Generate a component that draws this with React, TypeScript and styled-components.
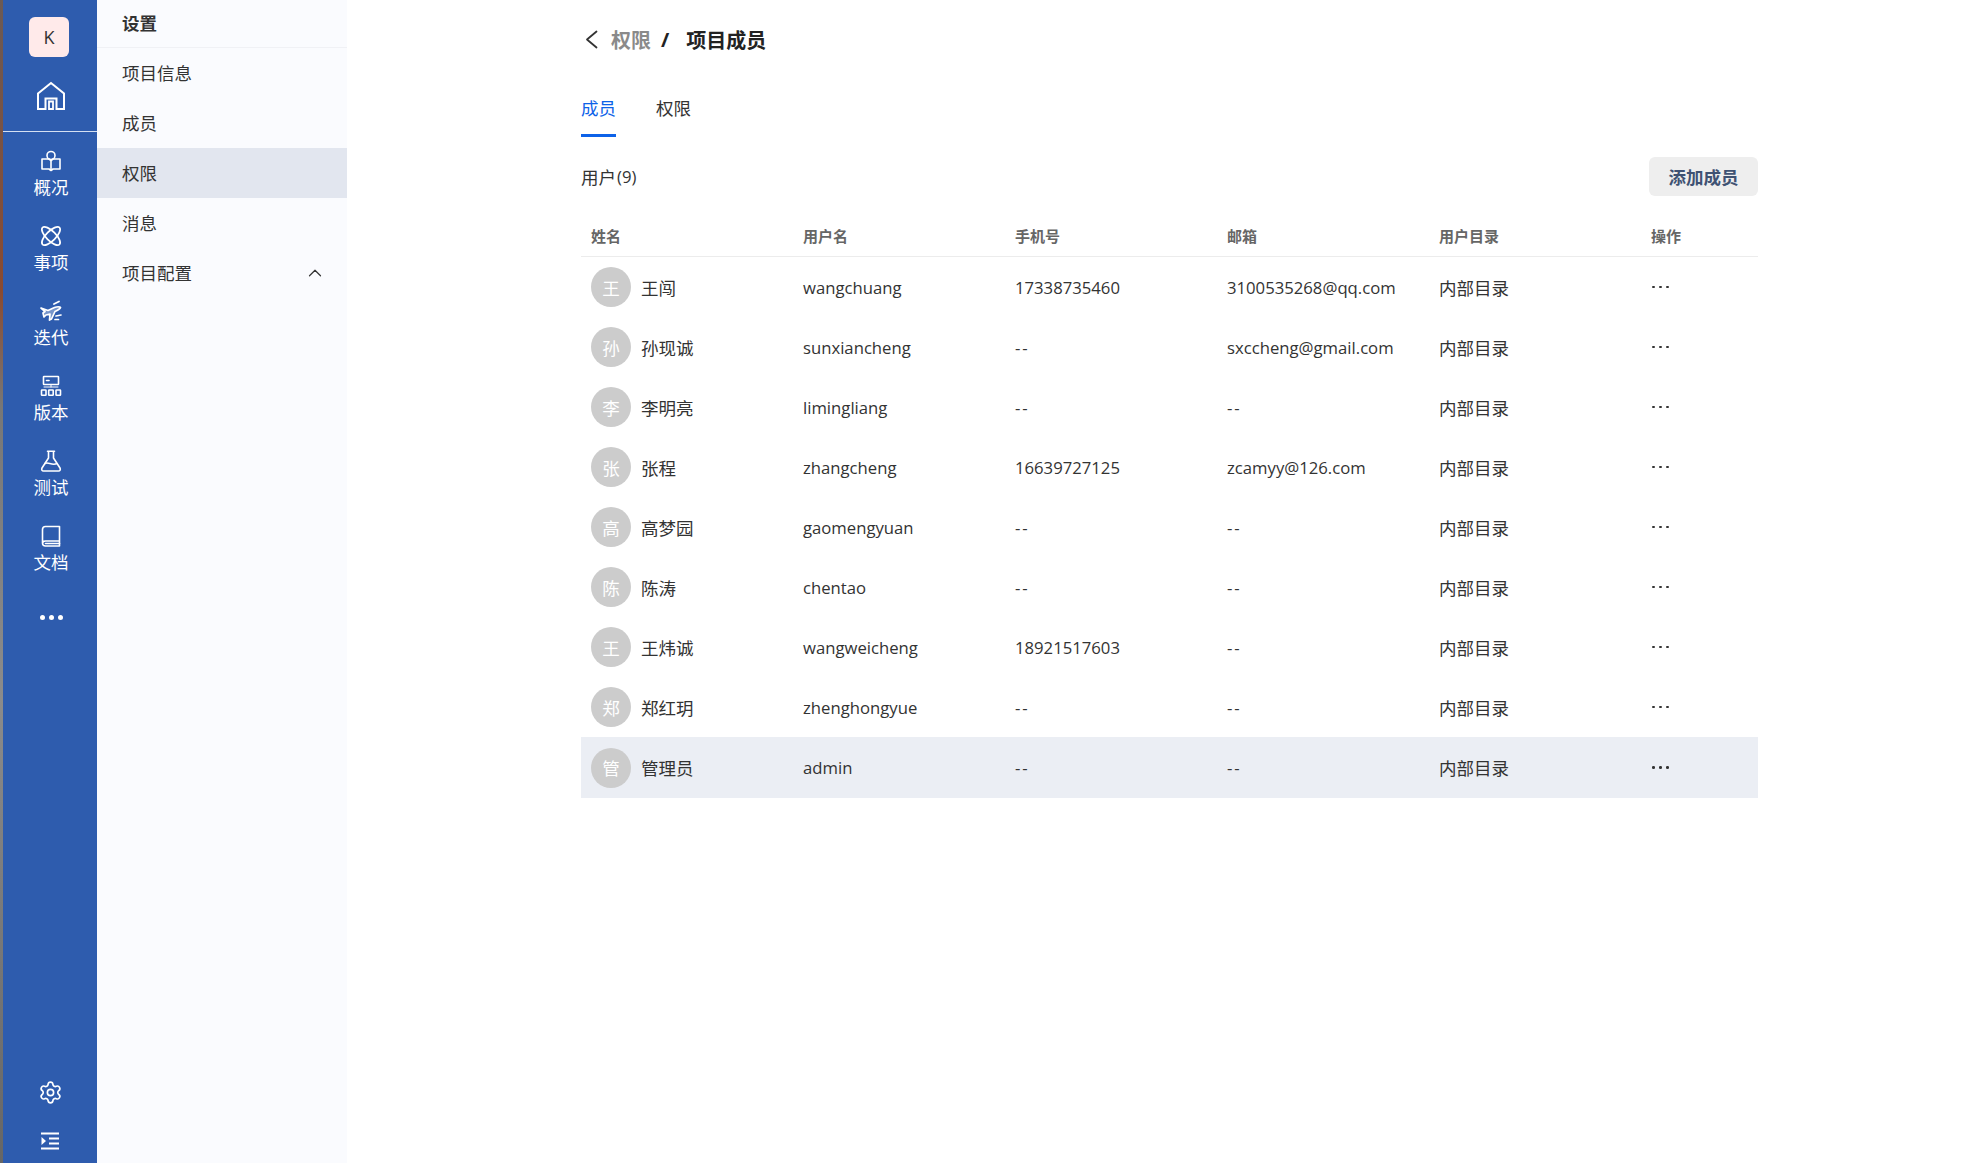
import React from 'react';
import styled, { createGlobalStyle } from 'styled-components';
import { ChevronUp, Settings } from 'lucide-react';

const FONT = '"Open Sans", "Noto Sans CJK SC", sans-serif';

const GlobalStyle = createGlobalStyle`
  html, body { margin: 0; padding: 0; height: 100%; background: #fff; }
  #root { height: 100%; }
  * { box-sizing: border-box; }
`;

const stroke = {
  fill: 'none',
  stroke: '#fff',
  strokeWidth: 1.6,
  strokeLinecap: 'round' as const,
  strokeLinejoin: 'round' as const,
};

const HomeIcon = () => (
  <svg width="30" height="30" viewBox="0 0 30 30" {...stroke} strokeWidth={2}>
    <path d="M2 12.5 L15 2 L28 12.5 V28 H20.5 V17.5 H9.5 V28 H2 Z" strokeLinecap="butt" strokeLinejoin="miter" />
    <path d="M13 28 V20.5 H17 V28 Z" strokeLinecap="butt" strokeLinejoin="miter" strokeWidth={1.8} />
  </svg>
);

const OverviewIcon = () => (
  <svg width="22" height="22" viewBox="0 0 22 22" {...stroke}>
    <circle cx="11" cy="5.5" r="4" />
    <path d="M2 9 H9 L11 10.5 L13 9 H20 V19 H13 L11 20.5 L9 19 H2 Z" />
    <path d="M11 10.5 V20" />
  </svg>
);

const IssueIcon = () => (
  <svg width="22" height="22" viewBox="0 0 22 22" {...stroke} strokeWidth={1.7}>
    <ellipse cx="11" cy="11" rx="12" ry="4.8" transform="rotate(45 11 11)" />
    <ellipse cx="11" cy="11" rx="12" ry="4.8" transform="rotate(-45 11 11)" />
  </svg>
);

const IterationIcon = () => (
  <svg width="22" height="22" viewBox="0 0 22 22" {...stroke} strokeWidth={1.7}>
    <path d="M1 8 L8 10.5 L14.5 7.5 C17 6.5 20 6.5 20.5 7.5 C20 9.5 17 10.5 15 11.5 L11.5 19 L9.5 20 L10 14 L6 15 L4 17 L3 13 L5 11.5 Z" fill="#fff" fillOpacity={0.35} />
    <path d="M14 4 L19 1.5 M16 16 L21 15 M15 19.5 L18.5 19.5" />
  </svg>
);

const VersionIcon = () => (
  <svg width="22" height="22" viewBox="0 0 22 22" {...stroke}>
    <rect x="3.5" y="1.5" width="15" height="8" rx="0.5" />
    <path d="M6.5 5.5 H9" />
    <path d="M11 9.5 V12 M4 12 H18" strokeWidth={1} />
    <rect x="1.5" y="15" width="4.5" height="5.2" rx="0.5" />
    <rect x="8.7" y="15" width="4.5" height="5.2" rx="0.5" />
    <rect x="16" y="15" width="4.5" height="5.2" rx="0.5" />
  </svg>
);

const TestIcon = () => (
  <svg width="22" height="22" viewBox="0 0 22 22" {...stroke}>
    <path d="M7.5 1.2 H14.5 M8.5 1.2 V8 L2 18 C1.2 19.5 2 21 3.5 21 H18.5 C20 21 20.8 19.5 20 18 L13.5 8 V1.2" />
    <path d="M5 13.5 C8 11.5 12 16 17 13.5" />
  </svg>
);

const DocIcon = () => (
  <svg width="22" height="22" viewBox="0 0 22 22" {...stroke}>
    <path d="M19.5 16 V1.5 H5.5 C3.5 1.5 2.5 2.5 2.5 4.5 V18 C2.5 20 3.5 21 5.5 21 H19.5 V16 H5.5 C3.5 16 2.5 17 2.5 18.5" />
    <path d="M5.5 18.5 H19.5" />
  </svg>
);

const IndentIcon = () => (
  <svg width="18" height="18" viewBox="0 0 18 18" fill="#fff">
    <rect x="0" y="0.5" width="18" height="2" />
    <rect x="8" y="5.5" width="10" height="2" />
    <rect x="8" y="10.5" width="10" height="2" />
    <rect x="0" y="15.5" width="18" height="2" />
    <path d="M0.5 5 L5 9 L0.5 13 Z" />
  </svg>
);

const BackIcon = () => (
  <svg width="13" height="19" viewBox="0 0 13 19" fill="none" stroke="#333" strokeWidth="1.8" strokeLinecap="round" strokeLinejoin="round">
    <path d="M11.5 1.5 L2 9.5 L11.5 17.5" />
  </svg>
);

const navItems = [
  { label: '概况', Icon: OverviewIcon },
  { label: '事项', Icon: IssueIcon },
  { label: '迭代', Icon: IterationIcon },
  { label: '版本', Icon: VersionIcon },
  { label: '测试', Icon: TestIcon },
  { label: '文档', Icon: DocIcon },
];

const menuItems = ['项目信息', '成员', '权限', '消息', '项目配置'];

const members = [
  { name: '王闯', user: 'wangchuang', phone: '17338735460', mail: '3100535268@qq.com' },
  { name: '孙现诚', user: 'sunxiancheng', phone: '--', mail: 'sxccheng@gmail.com' },
  { name: '李明亮', user: 'limingliang', phone: '--', mail: '--' },
  { name: '张程', user: 'zhangcheng', phone: '16639727125', mail: 'zcamyy@126.com' },
  { name: '高梦园', user: 'gaomengyuan', phone: '--', mail: '--' },
  { name: '陈涛', user: 'chentao', phone: '--', mail: '--' },
  { name: '王炜诚', user: 'wangweicheng', phone: '18921517603', mail: '--' },
  { name: '郑红玥', user: 'zhenghongyue', phone: '--', mail: '--' },
  { name: '管理员', user: 'admin', phone: '--', mail: '--' },
];

const columns = ['姓名', '用户名', '手机号', '邮箱', '用户目录', '操作'];

const App: React.FC = () => (
  <Page>
    <GlobalStyle />
    <WallpaperEdge />
    <Rail>
      <Logo>K</Logo>
      <HomeLink>
        <HomeIcon />
      </HomeLink>
      <RailNav>
        {navItems.map(({ label, Icon }) => (
          <RailItem key={label}>
            <RailGlyph>
              <Icon />
            </RailGlyph>
            <span>{label}</span>
          </RailItem>
        ))}
        <RailMore>
          <Dot />
          <Dot />
          <Dot />
        </RailMore>
      </RailNav>
      <RailFooter>
        <Settings size={25} strokeWidth={1.6} color="#fff" />
        <IndentIcon />
      </RailFooter>
    </Rail>

    <SideMenu>
      <SideTitle>设置</SideTitle>
      {menuItems.map((item) => (
        <MenuRow key={item} $active={item === '权限'}>
          <span>{item}</span>
          {item === '项目配置' && (
            <MenuChevron>
              <ChevronUp size={22} strokeWidth={1.3} color="#333" />
            </MenuChevron>
          )}
        </MenuRow>
      ))}
    </SideMenu>

    <Main>
      <Content>
        <Breadcrumb>
          <BackIcon />
          <CrumbLink>权限</CrumbLink>
          <CrumbSlash>/</CrumbSlash>
          <CrumbCurrent>项目成员</CrumbCurrent>
        </Breadcrumb>

        <Tabs>
          <Tab $active>成员</Tab>
          <Tab>权限</Tab>
        </Tabs>

        <Toolbar>
          <UserCount>
            用户<Count>(9)</Count>
          </UserCount>
          <AddButton>添加成员</AddButton>
        </Toolbar>

        <HeaderRow>
          {columns.map((col) => (
            <HeaderCell key={col}>{col}</HeaderCell>
          ))}
        </HeaderRow>

        {members.map((m) => (
          <MemberRow key={m.user} $hover={m.user === 'admin'}>
            <NameCell>
              <Avatar>{m.name[0]}</Avatar>
              <span>{m.name}</span>
            </NameCell>
            <Cell>{m.user}</Cell>
            <Cell $dash={m.phone === '--'}>{m.phone}</Cell>
            <Cell $dash={m.mail === '--'}>{m.mail}</Cell>
            <DirectoryCell>内部目录</DirectoryCell>
            <ActionCell>
              <ActionDot />
              <ActionDot />
              <ActionDot />
            </ActionCell>
          </MemberRow>
        ))}
      </Content>
    </Main>
  </Page>
);

const Page = styled.div`
  display: flex;
  height: 100vh;
  overflow: hidden;
  font-family: ${FONT};
  font-size: 17.5px;
  color: #333;
`;

const WallpaperEdge = styled.div`
  width: 3px;
  flex: none;
  background: linear-gradient(#6b5a55 0%, #8a4a30 25%, #777 35%, #8b8b8b 60%, #666 100%);
`;

const Rail = styled.nav`
  width: 94px;
  flex: none;
  background: #2e5cae;
  color: #fff;
  display: flex;
  flex-direction: column;
  align-items: center;
`;

const Logo = styled.div`
  width: 40px;
  height: 40px;
  margin: 17px 2px 0 0;
  border-radius: 6px;
  background: #ffeaea;
  color: #333;
  font-size: 18px;
  display: flex;
  align-items: center;
  justify-content: center;
`;

const HomeLink = styled.div`
  align-self: stretch;
  height: 75px;
  padding: 24px 0 0 2px;
  display: flex;
  justify-content: center;
  border-bottom: 1px solid #d5e0f2;
`;

const RailNav = styled.div`
  display: flex;
  flex-direction: column;
  align-items: center;
  padding: 18px 0 0 2px;
  flex: 1;
`;

const RailItem = styled.div`
  height: 75px;
  display: flex;
  flex-direction: column;
  align-items: center;
  line-height: 24px;
`;

const RailGlyph = styled.div`
  height: 22px;
  margin-bottom: 3px;
`;

const RailMore = styled.div`
  display: flex;
  gap: 4px;
  margin-top: 15px;
`;

const Dot = styled.i`
  width: 5px;
  height: 5px;
  border-radius: 50%;
  background: #fff;
`;

const RailFooter = styled.div`
  display: flex;
  flex-direction: column;
  align-items: center;
  gap: 27px;
  padding-bottom: 13px;
`;

const SideMenu = styled.aside`
  width: 250px;
  flex: none;
  background: #fafbfe;
`;

const SideTitle = styled.div`
  height: 48px;
  padding: 0 0 2px 25px;
  display: flex;
  align-items: center;
  font-weight: 700;
  border-bottom: 1px solid #f0f1f5;
`;

const MenuRow = styled.div<{ $active?: boolean }>`
  height: 50px;
  padding: 0 21px 2px 25px;
  display: flex;
  align-items: center;
  justify-content: space-between;
  background: ${(p) => (p.$active ? '#e2e6ef' : 'transparent')};
`;

const MenuChevron = styled.span`
  display: flex;
  margin-top: 2px;
`;

const Main = styled.main`
  flex: 1;
  padding-left: 234px;
`;

const Content = styled.div`
  width: 1177px;
`;

const Breadcrumb = styled.div`
  height: 40px;
  margin-top: 19px;
  padding-left: 4px;
  display: flex;
  align-items: center;
  font-size: 20px;
`;

const CrumbLink = styled.span`
  color: #8a8a8a;
  font-weight: 700;
  margin-left: 13px;
`;

const CrumbSlash = styled.span`
  color: #222;
  font-weight: 700;
  margin: 0 17px 0 10px;
`;

const CrumbCurrent = styled.span`
  color: #222;
  font-weight: 700;
`;

const Tabs = styled.div`
  display: flex;
  gap: 40px;
  margin-top: 29px;
`;

const Tab = styled.div<{ $active?: boolean }>`
  height: 49px;
  padding-top: 8px;
  line-height: 24px;
  color: ${(p) => (p.$active ? '#0d62e8' : '#333')};
  border-bottom: 3px solid ${(p) => (p.$active ? '#0d62e8' : 'transparent')};
`;

const Toolbar = styled.div`
  display: flex;
  align-items: center;
  justify-content: space-between;
  margin-top: 20px;
`;

const UserCount = styled.div`
  display: flex;
  align-items: center;
`;

const Count = styled.span`
  font-size: 16.7px;
  margin-left: 1px;
`;

const AddButton = styled.button`
  width: 109px;
  height: 39px;
  border: 0;
  border-radius: 6px;
  background: #eeeeee;
  color: #3f5273;
  font-family: ${FONT};
  font-size: 17.5px;
  font-weight: 700;
`;

const rowGrid = `
  display: grid;
  grid-template-columns: repeat(6, 212px);
  align-items: center;
`;

const HeaderRow = styled.div`
  ${rowGrid}
  height: 45px;
  margin-top: 16px;
  border-bottom: 1px solid #ececec;
  padding: 2px 0 0 10px;
`;

const HeaderCell = styled.div`
  font-size: 15px;
  font-weight: 700;
  color: #666;
`;

const MemberRow = styled.div<{ $hover?: boolean }>`
  ${rowGrid}
  height: ${(p) => (p.$hover ? '61px' : '60px')};
  padding-left: 10px;
  background: ${(p) => (p.$hover ? '#ebeef4' : 'transparent')};
`;

const NameCell = styled.div`
  display: flex;
  align-items: center;
  gap: 10px;
`;

const Avatar = styled.div`
  width: 40px;
  height: 40px;
  border-radius: 50%;
  background: #cccccc;
  color: #fff;
  display: flex;
  align-items: center;
  justify-content: center;
`;

const Cell = styled.div<{ $dash?: boolean }>`
  font-size: 16.7px;
  letter-spacing: ${(p) => (p.$dash ? '2px' : 'normal')};
`;

const DirectoryCell = styled.div``;

const ActionCell = styled.div`
  display: flex;
  align-items: center;
  gap: 4.6px;
  padding-left: 1px;
`;

const ActionDot = styled.i`
  width: 2.6px;
  height: 2.6px;
  border-radius: 50%;
  background: #333;
`;

export default App;
